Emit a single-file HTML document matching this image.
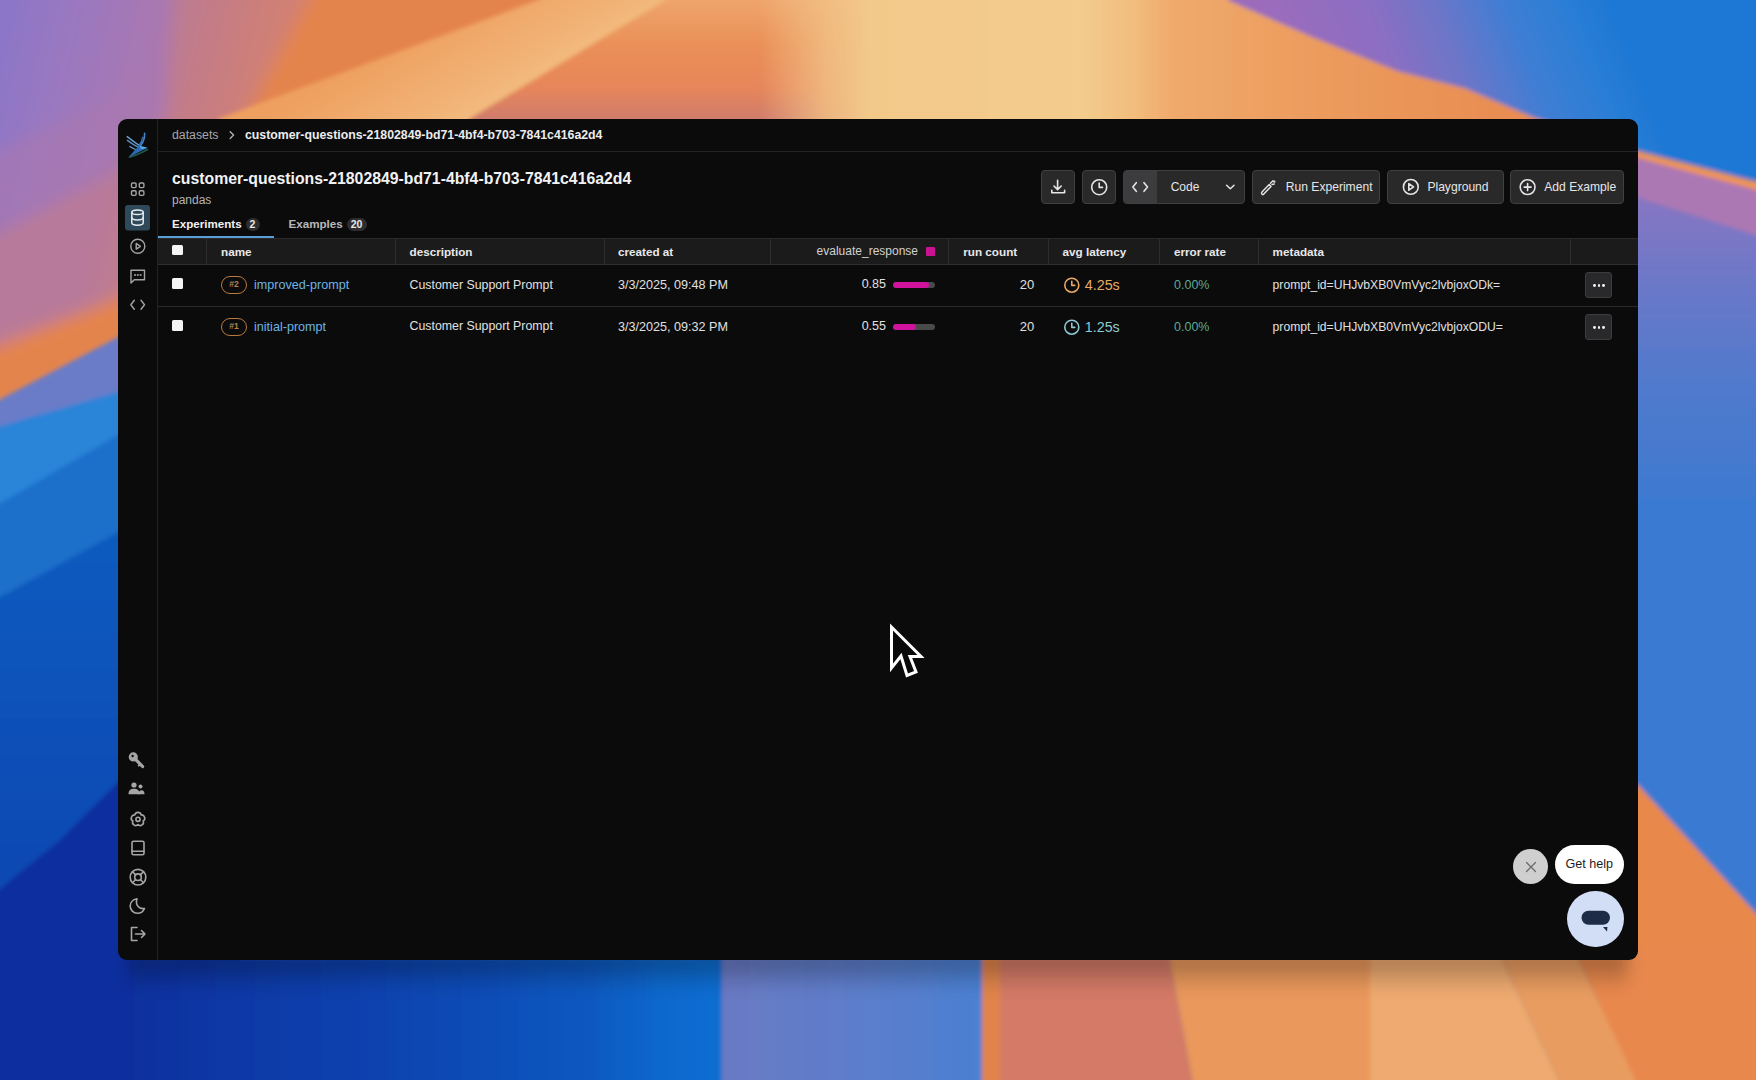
<!DOCTYPE html>
<html><head><meta charset="utf-8">
<style>
*{box-sizing:border-box;margin:0;padding:0}
html,body{width:1756px;height:1080px;overflow:hidden;background:#3a6fc8;font-family:"Liberation Sans",sans-serif}
#bg{position:absolute;left:0;top:0;width:1756px;height:1080px}
#win{position:absolute;left:118px;top:119px;width:1520px;height:841px;background:#0b0b0b;border-radius:9px;overflow:hidden}
.abs{position:absolute;white-space:nowrap}
#side{position:absolute;left:0;top:0;width:39px;height:842px;border-right:1px solid #1e1e20;background:#0e0e0f}
#crumb{position:absolute;left:40px;top:0;right:0;height:33px;border-bottom:1px solid #222224}
.t12{font-size:12px}
.btn{position:absolute;top:51px;height:34px;background:#29292a;border:1px solid #404042;border-radius:4px;color:#e6e6e6;font-size:12px}
.ico{position:absolute}
.th{position:absolute;top:119px;height:27px;background:#1a1a1b;border-bottom:1px solid #2c2c2e;left:40px;right:0}
.sep{position:absolute;top:0;width:1px;height:26px;background:#2e2e30}
.hd{position:absolute;font-size:11.7px;line-height:1;font-weight:700;color:#e8e8ea}
.row{position:absolute;left:40px;right:0;height:42px;border-bottom:1px solid #2a2a2c}
.cell{position:absolute;font-size:12px;color:#e0e0e0;white-space:nowrap}
</style></head><body>
<svg id="bg" width="1756" height="1080" viewBox="0 0 1756 1080">
<defs>
<filter id="b3" x="-10%" y="-10%" width="120%" height="120%"><feGaussianBlur stdDeviation="2"/></filter>
<filter id="b8" x="-20%" y="-20%" width="140%" height="140%"><feGaussianBlur stdDeviation="8"/></filter>
<linearGradient id="gLeft" gradientUnits="userSpaceOnUse" x1="0" y1="560" x2="0" y2="900">
<stop offset="0" stop-color="#0e5abe"/><stop offset="0.5" stop-color="#0a50b8"/><stop offset="1" stop-color="#0a48b2"/></linearGradient>
<linearGradient id="gPurp" gradientUnits="userSpaceOnUse" x1="0" y1="0" x2="180" y2="40">
<stop offset="0" stop-color="#8a76c8"/><stop offset="0.4" stop-color="#9a78c0"/><stop offset="1" stop-color="#ae78ac"/></linearGradient>
<linearGradient id="gSalm" gradientUnits="userSpaceOnUse" x1="150" y1="20" x2="270" y2="50">
<stop offset="0" stop-color="#b87a9a"/><stop offset="0.5" stop-color="#c47c86"/><stop offset="1" stop-color="#d08074"/></linearGradient>
<linearGradient id="gBand" gradientUnits="userSpaceOnUse" x1="400" y1="40" x2="470" y2="160">
<stop offset="0" stop-color="#eea060"/><stop offset="0.6" stop-color="#f2b478"/><stop offset="1" stop-color="#f5c888"/></linearGradient>
<linearGradient id="gOrR" gradientUnits="userSpaceOnUse" x1="0" y1="0" x2="0" y2="125">
<stop offset="0" stop-color="#eea56c"/><stop offset="0.35" stop-color="#ea9058"/><stop offset="0.7" stop-color="#e6865a"/><stop offset="1" stop-color="#cc7a70"/></linearGradient>
<linearGradient id="gFade" gradientUnits="userSpaceOnUse" x1="760" y1="0" x2="870" y2="0">
<stop offset="0" stop-color="#f3c68a" stop-opacity="0"/><stop offset="0.6" stop-color="#f2c286" stop-opacity="0.8"/><stop offset="1" stop-color="#f3c98a" stop-opacity="1"/></linearGradient>
<linearGradient id="gCream" gradientUnits="userSpaceOnUse" x1="860" y1="0" x2="1550" y2="0">
<stop offset="0" stop-color="#f3c98a"/><stop offset="0.32" stop-color="#f3cc8e"/><stop offset="0.4" stop-color="#f2bc7c"/><stop offset="0.45" stop-color="#f0aa6c"/><stop offset="0.65" stop-color="#ec9c5e"/><stop offset="1" stop-color="#e88a50"/></linearGradient>
<linearGradient id="gSky" gradientUnits="userSpaceOnUse" x1="1260" y1="0" x2="1560" y2="-120">
<stop offset="0" stop-color="#9c6cbc"/><stop offset="0.3" stop-color="#8c6ec2"/><stop offset="0.5" stop-color="#6c76c8"/><stop offset="0.7" stop-color="#3e7ed4"/><stop offset="0.88" stop-color="#2a7ed6"/><stop offset="1" stop-color="#1e78d4"/></linearGradient>
<linearGradient id="gRmid" gradientUnits="userSpaceOnUse" x1="0" y1="190" x2="0" y2="500">
<stop offset="0" stop-color="#8a76c2"/><stop offset="0.3" stop-color="#6c78c8"/><stop offset="0.6" stop-color="#527acc"/><stop offset="1" stop-color="#3e7ad0"/></linearGradient>
<linearGradient id="gBL" gradientUnits="userSpaceOnUse" x1="118" y1="0" x2="722" y2="0">
<stop offset="0" stop-color="#0a2e9e"/><stop offset="0.15" stop-color="#0a36a4"/><stop offset="0.5" stop-color="#0a46b2"/><stop offset="0.78" stop-color="#0a58c0"/><stop offset="0.9" stop-color="#0a68cc"/><stop offset="1" stop-color="#0c6ed2"/></linearGradient>
<linearGradient id="gLav" gradientUnits="userSpaceOnUse" x1="722" y1="0" x2="982" y2="0">
<stop offset="0" stop-color="#6a7ac4"/><stop offset="0.6" stop-color="#5a7ecc"/><stop offset="1" stop-color="#4a80d2"/></linearGradient>
<linearGradient id="gShadow" x1="0" y1="0" x2="0" y2="1">
<stop offset="0" stop-color="#000" stop-opacity="0.35"/><stop offset="1" stop-color="#000" stop-opacity="0"/></linearGradient>
</defs>
<rect x="0" y="0" width="1756" height="1080" fill="#1a6ac8"/>
<g filter="url(#b8)">
<rect x="-20" y="-20" width="420" height="720" fill="url(#gPurp)"/>
<polygon points="-20,160 118,95 165,60 175,-20 260,-20 260,300 -20,300" fill="#a878b0" opacity="0.7"/>
<polygon points="-20,244 118,170 165,119 175,-20 900,-20 900,700 -20,700" fill="url(#gSalm)"/>
<polygon points="-20,352 118,298 245,119 318,-20 900,-20 900,700 -20,700" fill="#e4844e"/>
</g>
<g filter="url(#b3)">
<!-- LEFT STRIP -->
<polygon points="-20,410 118,337 240,280 240,700 -20,700" fill="#6a7cc8"/>
<polygon points="-20,432 118,392 240,340 240,1100 -20,1100" fill="#2a84d8"/>
<polygon points="-20,515 118,435 240,400 240,1100 -20,1100" fill="#1a70ca"/>
<polygon points="-20,608 118,532 240,480 240,1100 -20,1100" fill="url(#gLeft)"/>
<polygon points="-20,905 60,840 118,782 240,700 240,1100 -20,1100" fill="#0a2e9e"/>
<!-- TOP STRIP -->
<polygon points="560,-20 694,-20 666,0 471,118 450,140 200,140 220,118 538,0" fill="url(#gBand)"/>
<polygon points="694,-20 1000,-20 1000,140 450,140 471,118 666,0" fill="url(#gOrR)"/>
<rect x="760" y="-20" width="240" height="160" fill="url(#gFade)"/>
<polygon points="870,-20 1228,-20 1228,0 1313,37 1398,71 1465,88 1533,117 1600,140 870,140" fill="url(#gCream)"/>
<polygon points="1228,-20 1776,-20 1776,186 1638,150 1533,117 1465,88 1398,71 1313,37 1228,0" fill="url(#gSky)"/>
<!-- RIGHT STRIP -->
<polygon points="1600,152 1638,158 1776,194 1776,242 1638,198 1600,190" fill="#ac78b4"/>
<polygon points="1600,140 1638,151 1776,187 1776,195 1638,158 1600,148" fill="#f29452"/>
<polygon points="1600,190 1638,198 1776,242 1776,500 1600,500" fill="url(#gRmid)"/>
<polygon points="1600,500 1776,500 1776,935 1638,785 1600,770" fill="#3a7ad2"/>
<polygon points="1600,770 1638,785 1776,935 1776,1100 1600,1100" fill="#e8884c"/>
<!-- BOTTOM STRIP -->
<rect x="118" y="958" width="604" height="150" fill="url(#gBL)"/>
<rect x="722" y="950" width="260" height="150" fill="url(#gLav)"/>
<polygon points="982,950 1168,950 1196,1100 982,1100" fill="#d47a66"/>
<polygon points="982,950 1000,950 1000,1100 982,1100" fill="#e0844c"/>
<polygon points="1168,950 1370,950 1370,1100 1196,1100" fill="#ea985c"/>
<polygon points="1370,950 1497,950 1568,1100 1370,1100" fill="#eeaa70"/>
<polygon points="1497,950 1574,950 1645,1100 1568,1100" fill="#e99c60"/>
<polygon points="1574,950 1776,950 1776,1100 1645,1100" fill="#e8884e"/>
</g>
<rect x="128" y="952" width="1500" height="40" fill="url(#gShadow)" filter="url(#b8)"/>
</svg>


<div id="win"></div>
<div class="abs" style="left:157px;top:119px;width:1px;height:841px;background:#222224"></div>
<div class="abs" style="left:158px;top:151px;width:1480px;height:1px;background:#242426"></div>
<!-- logo -->
<svg class="abs" style="left:120px;top:127px" width="36" height="36" viewBox="120 127 36 36">
<g fill="none" stroke-linecap="round">
<path d="M127.2 136.6 C131 139.5 135 142.5 139 145.2" stroke="#6a9cc8" stroke-width="1.5"/>
<path d="M127.4 140.4 C131 143 134.5 145.5 138.5 147.2" stroke="#5a90c4" stroke-width="1.4"/>
<path d="M129.8 146.5 C132 147.8 134 149 136.5 150" stroke="#5a8cc0" stroke-width="1.3"/>
<path d="M144.6 133.3 C144.8 137.5 143.5 142 140.5 145.8" stroke="#3f86cc" stroke-width="1.6"/>
<path d="M142.5 137.5 C142 140.5 141 143 139.5 145" stroke="#3576bc" stroke-width="1.3"/>
<path d="M147.5 149.5 C143 152 136 155 129.5 157.3" stroke="#1f5a48" stroke-width="1.6"/>
</g>
<path d="M138.5 145.5 C141.5 146.3 144.5 147 147.6 147.8 C145 149.5 141 151 136 153.5 C133.5 154.8 131 156 128.6 157.2 C131 154.5 134 151 137 148 Z" fill="#2a6cb4"/>
<path d="M140 146 C142.5 146.4 145 147 147.4 147.8 C145 148.8 142.5 149.2 140.5 148.8 Z" fill="#5aa8e6"/>
</svg>
<!-- sidebar icons -->
<svg class="abs" style="left:118px;top:170px" width="40" height="800" viewBox="0 0 40 800" fill="none" stroke="#a4a4a6" stroke-width="1.4" stroke-linecap="round" stroke-linejoin="round">
 <rect x="13.5" y="13" width="4.6" height="4.6" rx="1.1"/><rect x="21.3" y="13" width="4.6" height="4.6" rx="1.1"/>
 <rect x="13.5" y="20.8" width="4.6" height="4.6" rx="1.1"/><rect x="21.3" y="20.8" width="4.6" height="4.6" rx="1.1"/>
 <rect x="7" y="35" width="25" height="25.5" rx="3" fill="#2e4a5a" stroke="none"/>
 <g stroke="#e4eaee" stroke-width="1.5">
 <ellipse cx="19.5" cy="42.3" rx="5.7" ry="2.3"/>
 <path d="M13.8 42.3 V52.8 C13.8 54.2 16.3 55.2 19.5 55.2 C22.7 55.2 25.2 54.2 25.2 52.8 V42.3"/>
 <path d="M13.8 47.6 C13.8 49 16.3 50 19.5 50 C22.7 50 25.2 49 25.2 47.6"/>
 </g>
 <circle cx="19.8" cy="76.3" r="7"/><path d="M18.2 73.4 L22.4 76.3 L18.2 79.2 Z"/>
 <path d="M13 100.3 H26.5 V109.8 H16.3 L13 113 Z"/>
 <circle cx="17" cy="105" r="0.35" fill="#a4a4a6"/><circle cx="19.8" cy="105" r="0.35" fill="#a4a4a6"/><circle cx="22.6" cy="105" r="0.35" fill="#a4a4a6"/>
 <path d="M16.3 130.3 L12.8 134.8 L16.3 139.3"/><path d="M23 130.3 L26.5 134.8 L23 139.3"/>
</svg>
<svg class="abs" style="left:118px;top:740px" width="40" height="220" viewBox="0 0 40 220" fill="none" stroke="#a6a6a8" stroke-width="1.6" stroke-linecap="round" stroke-linejoin="round">
 <!-- key 752-768 => 12-28 -->
 <path fill="#a4a4a6" stroke="none" fill-rule="evenodd" d="M15.3 12.3 A4.6 4.6 0 1 1 15.3 21.5 A4.6 4.6 0 1 1 15.3 12.3 Z M14.6 14.8 A1.2 1.2 0 1 0 14.6 17.2 A1.2 1.2 0 1 0 14.6 14.8 Z"/>
 <path d="M17.8 19.6 L24.6 26.5" stroke-width="3.2"/><path d="M22 24.5 L20.8 25.6" stroke-width="2"/>
 <!-- people 782-794 => 42-54 -->
 <circle cx="16" cy="45" r="2.6" fill="#a6a6a8" stroke="none"/><circle cx="22.5" cy="46.5" r="2" fill="#a6a6a8" stroke="none"/>
 <path d="M10.5 54.3 C10.5 50 13 48.8 16 48.8 C19 48.8 21.5 50 21.5 54.3Z" fill="#a6a6a8" stroke="none"/>
 <path d="M20 54.3 C20.5 51.5 22 50.3 23.5 50.3 C25.5 50.3 26.5 51.5 26.5 54.3Z" fill="#a6a6a8" stroke="none"/>
 <!-- gear flower 811-827 => 71-87 -->
 <path d="M16.83 74.93 A3.25 3.25 0 0 1 23.17 74.93 A3.25 3.25 0 0 1 25.14 80.97 A3.25 3.25 0 0 1 20.00 84.70 A3.25 3.25 0 0 1 14.86 80.97 A3.25 3.25 0 0 1 16.83 74.93 Z"/>
 <circle cx="20" cy="79.3" r="2.1"/>
 <!-- book 841-855 => 101-115 -->
 <rect x="14" y="101.2" width="12" height="13.6" rx="1.5"/><path d="M14 111.2 H26"/>
 <!-- lifebuoy 868.7-885.7 => 128.7-145.7 -->
 <circle cx="20" cy="137.2" r="7.8"/><circle cx="20" cy="137.2" r="3.3"/>
 <path d="M14.5 131.7 L17.7 134.9 M25.5 131.7 L22.3 134.9 M14.5 142.7 L17.7 139.5 M25.5 142.7 L22.3 139.5"/>
 <!-- moon 898-913 => 158-173 -->
 <path d="M19 158.8 C14.5 159.6 12.2 163 12.2 166 C12.2 170 15.3 173.2 19.5 173.2 C23 173.2 25.5 171 26.5 168.5 C21 169.5 17 165 19 158.8 Z"/>
 <!-- logout 927-941 => 187-201 -->
 <path d="M19 187.5 H13.5 V200.5 H19"/><path d="M17.5 194 H27 M23.5 190.5 L27 194 L23.5 197.5"/>
</svg>

<!-- breadcrumb -->
<div class="abs" style="left:172px;top:128.7px;font-size:12.3px;line-height:1;color:#a6a6a8">datasets</div>
<svg class="abs" style="left:226px;top:129px" width="12" height="12" viewBox="0 0 12 12"><path d="M4.2 2.8 L7.6 6.1 L4.2 9.4" fill="none" stroke="#b0b0b2" stroke-width="1.4" stroke-linecap="round" stroke-linejoin="round"/></svg>
<div class="abs" style="left:245px;top:128.9px;font-size:12.3px;line-height:1;font-weight:700;color:#ececee">customer-questions-21802849-bd71-4bf4-b703-7841c416a2d4</div>
<!-- title -->
<div class="abs" style="left:172px;top:171.2px;font-size:15.8px;line-height:1;font-weight:700;color:#f2f2f4">customer-questions-21802849-bd71-4bf4-b703-7841c416a2d4</div>
<div class="abs" style="left:172px;top:193.8px;font-size:12px;line-height:1;color:#b4b4b6">pandas</div>
<!-- tabs -->
<div class="abs" style="left:172px;top:218.3px;font-size:11.6px;line-height:1;font-weight:700;color:#f2f2f4">Experiments</div>
<div class="abs badge" style="left:245.5px;top:217.7px;width:14px;height:13px;border-radius:7px;background:#2e2e30;color:#e8e8e8;font-size:10.5px;font-weight:700;line-height:13px;text-align:center">2</div>
<div class="abs" style="left:288.5px;top:218.3px;font-size:11.6px;line-height:1;font-weight:700;color:#b8b8ba">Examples</div>
<div class="abs badge" style="left:346.5px;top:217.7px;width:20px;height:13px;border-radius:7px;background:#2e2e30;color:#e8e8e8;font-size:10.5px;font-weight:700;line-height:13px;text-align:center">20</div>
<div class="abs" style="left:158px;top:238px;width:1480px;height:1px;background:#2a2a2c"></div>
<div class="abs" style="left:158px;top:236.3px;width:116px;height:2px;background:#5a9ed8"></div>
<!-- table header -->
<div class="abs" style="left:158px;top:238.5px;width:1480px;height:25.5px;background:#1b1b1b"></div>
<div class="abs" style="left:158px;top:264px;width:1480px;height:1px;background:#2e2e30"></div>
<div class="abs" style="left:206px;top:239px;width:1px;height:25px;background:#2e2e30"></div>
<div class="abs" style="left:394.5px;top:239px;width:1px;height:25px;background:#2e2e30"></div>
<div class="abs" style="left:604px;top:239px;width:1px;height:25px;background:#2e2e30"></div>
<div class="abs" style="left:770px;top:239px;width:1px;height:25px;background:#2e2e30"></div>
<div class="abs" style="left:948px;top:239px;width:1px;height:25px;background:#2e2e30"></div>
<div class="abs" style="left:1048px;top:239px;width:1px;height:25px;background:#2e2e30"></div>
<div class="abs" style="left:1159px;top:239px;width:1px;height:25px;background:#2e2e30"></div>
<div class="abs" style="left:1257.5px;top:239px;width:1px;height:25px;background:#2e2e30"></div>
<div class="abs" style="left:1569.5px;top:239px;width:1px;height:25px;background:#2e2e30"></div>
<div class="abs" style="left:172px;top:244.5px;width:11px;height:10.5px;background:#f4f4f4;border-radius:1.5px"></div>
<div class="abs hd" style="left:221px;top:245.6px">name</div>
<div class="abs hd" style="left:409.5px;top:245.6px">description</div>
<div class="abs hd" style="left:618px;top:245.6px">created at</div>
<div class="abs hd" style="left:816.6px;top:245.4px;font-size:12px;font-weight:400;color:#d2d2d4">evaluate_response</div>
<div class="abs" style="left:926px;top:246.5px;width:9px;height:9.5px;background:#cc1294;border-radius:1px"></div>
<div class="abs hd" style="left:963.3px;top:245.6px">run count</div>
<div class="abs hd" style="left:1062.5px;top:245.6px">avg latency</div>
<div class="abs hd" style="left:1174px;top:245.6px">error rate</div>
<div class="abs hd" style="left:1272.6px;top:245.6px">metadata</div>
<!-- rows -->
<div class="abs" style="left:158px;top:305.5px;width:1480px;height:1px;background:#2a2a2c"></div>
<div class="abs" style="left:172px;top:278.2px;width:11px;height:10.8px;background:#f4f4f4;border-radius:1.5px"></div>
<div class="abs" style="left:221px;top:276.0px;width:26px;height:18px;border:1.3px solid #b87a3e;border-radius:9px;color:#b08456;font-size:8.6px;font-weight:700;line-height:15.4px;text-align:center">#2</div>
<div class="abs cell" style="left:254px;top:279.1px;font-size:12.6px;line-height:1;color:#6cb4e4">improved-prompt</div>
<div class="abs cell" style="left:409.5px;top:278.5px;font-size:12.35px;line-height:1">Customer Support Prompt</div>
<div class="abs cell" style="left:618px;top:279.1px;font-size:12.6px;line-height:1">3/3/2025, 09:48 PM</div>
<div class="abs cell" style="right:870px;top:278.4px;font-size:12.5px;line-height:1">0.85</div>
<div class="abs" style="left:892.5px;top:282.0px;width:42.5px;height:6px;border-radius:3px;background:#4a4a4c;overflow:hidden"><div style="width:85%;height:6px;background:#d0129c;border-radius:3px"></div></div>
<div class="abs cell" style="right:721.7px;top:278.0px;font-size:13px;line-height:1">20</div>
<svg class="abs" style="left:1063px;top:277.0px" width="18" height="17" viewBox="0 0 18 17"><circle cx="8.8" cy="8.2" r="7" fill="none" stroke="#e8a866" stroke-width="1.6"/><path d="M8.8 4.3 V8.4 H11.8" fill="none" stroke="#e8a866" stroke-width="1.6" stroke-linecap="round" stroke-linejoin="round"/></svg>
<div class="abs cell" style="left:1084.8px;top:277.7px;line-height:1;font-size:14.3px;color:#e8a866">4.25s</div>
<div class="abs cell" style="left:1174px;top:279.4px;font-size:12.5px;line-height:1;color:#5caa94">0.00%</div>
<div class="abs cell" style="left:1272.6px;top:278.7px;font-size:12.15px;line-height:1">prompt_id=UHJvbXB0VmVyc2lvbjoxODk=</div>
<div class="abs" style="left:1584.5px;top:272.4px;width:27px;height:26px;background:#29292b;border:1px solid #3c3c3e;border-radius:3px"></div>
<div class="abs" style="left:1593.2px;top:284.0px;width:2.8px;height:2.8px;border-radius:50%;background:#f0f0f0"></div>
<div class="abs" style="left:1597.6px;top:284.0px;width:2.8px;height:2.8px;border-radius:50%;background:#f0f0f0"></div>
<div class="abs" style="left:1602.0px;top:284.0px;width:2.8px;height:2.8px;border-radius:50%;background:#f0f0f0"></div>
<div class="abs" style="left:172px;top:320.0px;width:11px;height:10.8px;background:#f4f4f4;border-radius:1.5px"></div>
<div class="abs" style="left:221px;top:317.8px;width:26px;height:18px;border:1.3px solid #b87a3e;border-radius:9px;color:#b08456;font-size:8.6px;font-weight:700;line-height:15.4px;text-align:center">#1</div>
<div class="abs cell" style="left:254px;top:320.9px;font-size:12.6px;line-height:1;color:#6cb4e4">initial-prompt</div>
<div class="abs cell" style="left:409.5px;top:320.3px;font-size:12.35px;line-height:1">Customer Support Prompt</div>
<div class="abs cell" style="left:618px;top:320.9px;font-size:12.6px;line-height:1">3/3/2025, 09:32 PM</div>
<div class="abs cell" style="right:870px;top:320.2px;font-size:12.5px;line-height:1">0.55</div>
<div class="abs" style="left:892.5px;top:323.8px;width:42.5px;height:6px;border-radius:3px;background:#4a4a4c;overflow:hidden"><div style="width:55%;height:6px;background:#d0129c;border-radius:3px"></div></div>
<div class="abs cell" style="right:721.7px;top:319.8px;font-size:13px;line-height:1">20</div>
<svg class="abs" style="left:1063px;top:318.8px" width="18" height="17" viewBox="0 0 18 17"><circle cx="8.8" cy="8.2" r="7" fill="none" stroke="#8ccad4" stroke-width="1.6"/><path d="M8.8 4.3 V8.4 H11.8" fill="none" stroke="#8ccad4" stroke-width="1.6" stroke-linecap="round" stroke-linejoin="round"/></svg>
<div class="abs cell" style="left:1084.8px;top:319.5px;line-height:1;font-size:14.3px;color:#8ccad4">1.25s</div>
<div class="abs cell" style="left:1174px;top:321.2px;font-size:12.5px;line-height:1;color:#5caa94">0.00%</div>
<div class="abs cell" style="left:1272.6px;top:320.5px;font-size:12.15px;line-height:1">prompt_id=UHJvbXB0VmVyc2lvbjoxODU=</div>
<div class="abs" style="left:1584.5px;top:314.2px;width:27px;height:26px;background:#29292b;border:1px solid #3c3c3e;border-radius:3px"></div>
<div class="abs" style="left:1593.2px;top:325.8px;width:2.8px;height:2.8px;border-radius:50%;background:#f0f0f0"></div>
<div class="abs" style="left:1597.6px;top:325.8px;width:2.8px;height:2.8px;border-radius:50%;background:#f0f0f0"></div>
<div class="abs" style="left:1602.0px;top:325.8px;width:2.8px;height:2.8px;border-radius:50%;background:#f0f0f0"></div>
<!-- header buttons -->
<div class="btn" style="left:1041px;top:170px;width:33.5px;height:34px"></div>
<svg class="abs" style="left:1041px;top:170px" width="34" height="34" viewBox="0 0 34 34" fill="none" stroke="#e6e6e8" stroke-width="1.6" stroke-linecap="round" stroke-linejoin="round"><path d="M16.6 10.3 V19.5 M13 16 L16.6 19.6 L20.2 16"/><path d="M10.8 20.3 V22.8 H23.6 V20.3"/></svg>
<div class="btn" style="left:1081.5px;top:170px;width:34.5px;height:34px"></div>
<svg class="abs" style="left:1081.5px;top:170px" width="34" height="34" viewBox="0 0 34 34" fill="none" stroke="#e6e6e8" stroke-width="1.6" stroke-linecap="round" stroke-linejoin="round"><circle cx="17.2" cy="17.2" r="7.5"/><path d="M17.2 13 V17.4 H20.5"/></svg>
<div class="btn" style="left:1123px;top:170px;width:122px;height:34px;overflow:hidden"><div style="position:absolute;left:0;top:0;width:33px;height:34px;background:#3c3c3e"></div></div>
<svg class="abs" style="left:1123px;top:170px" width="40" height="34" viewBox="0 0 40 34" fill="none" stroke="#e6e6e8" stroke-width="1.6" stroke-linecap="round" stroke-linejoin="round"><path d="M13.3 12.7 L9.8 17 L13.3 21.3 M21 12.7 L24.5 17 L21 21.3"/></svg>
<div class="abs" style="left:1170.7px;top:181.2px;font-size:12px;line-height:1;color:#e6e6e8">Code</div>
<svg class="abs" style="left:1223px;top:180px" width="14" height="14" viewBox="0 0 14 14" fill="none" stroke="#e6e6e8" stroke-width="1.5" stroke-linecap="round" stroke-linejoin="round"><path d="M3.6 5.2 L7.3 8.8 L11 5.2"/></svg>
<div class="btn" style="left:1252px;top:170px;width:128px;height:34px"></div>
<svg class="abs" style="left:1252px;top:170px" width="30" height="34" viewBox="0 0 30 34" fill="none" stroke="#e6e6e8" stroke-width="1.4" stroke-linecap="round" stroke-linejoin="round"><path d="M10.3 24.5 C9.3 23.8 9.3 22.8 10 22 L17.2 14.6 L19 16.4 L11.8 24 C11.2 24.7 10.9 24.8 10.3 24.5 Z"/><path d="M18.5 13.3 L21 10.8 M20 14.5 L22.2 14"/><circle cx="22.3" cy="11.6" r="0.5" fill="#e6e6e8"/></svg>
<div class="abs" style="left:1285.8px;top:181.1px;font-size:12.1px;line-height:1;color:#e6e6e8">Run Experiment</div>
<div class="btn" style="left:1387px;top:170px;width:116.5px;height:34px"></div>
<svg class="abs" style="left:1387px;top:170px" width="34" height="34" viewBox="0 0 34 34" fill="none" stroke="#e6e6e8" stroke-width="1.6" stroke-linecap="round" stroke-linejoin="round"><circle cx="23.8" cy="16.9" r="7.4"/><path d="M21.8 13.6 L26.6 16.9 L21.8 20.2 Z"/></svg>
<div class="abs" style="left:1427.4px;top:181px;font-size:12.1px;line-height:1;color:#e6e6e8">Playground</div>
<div class="btn" style="left:1510px;top:170px;width:114px;height:34px"></div>
<svg class="abs" style="left:1510px;top:170px" width="34" height="34" viewBox="0 0 34 34" fill="none" stroke="#e6e6e8" stroke-width="1.6" stroke-linecap="round" stroke-linejoin="round"><circle cx="17.6" cy="17.1" r="7.4"/><path d="M17.6 13.6 V20.6 M14.1 17.1 H21.1"/></svg>
<div class="abs" style="left:1544.3px;top:181px;font-size:12.1px;line-height:1;color:#e6e6e8">Add Example</div>
<!-- help widget -->
<div class="abs" style="left:1512.5px;top:848.5px;width:35.5px;height:35.5px;border-radius:50%;background:#cfcfd0"></div>
<svg class="abs" style="left:1512.5px;top:848.5px" width="36" height="36" viewBox="0 0 36 36" fill="none" stroke="#6a6a6c" stroke-width="1.3" stroke-linecap="round"><path d="M13.5 13.5 L22.5 22.5 M22.5 13.5 L13.5 22.5"/></svg>
<div class="abs" style="left:1554.5px;top:844.5px;width:69.5px;height:39.5px;border-radius:20px;background:#ffffff;color:#1e1e1e;font-size:12.6px;line-height:39.5px;text-align:center">Get help</div>
<div class="abs" style="left:1567.3px;top:890.7px;width:56.5px;height:56.5px;border-radius:50%;background:#d2ddf6"></div>
<svg class="abs" style="left:1567.3px;top:890.7px" width="57" height="57" viewBox="0 0 57 57"><rect x="14.5" y="19.8" width="28.5" height="14" rx="7" fill="#1f2c48"/><path d="M36 36 L40.5 36 L40 40.5 Z" fill="#1f2c48"/></svg>
<!-- cursor -->
<svg class="abs" style="left:880px;top:615px" width="60" height="70" viewBox="880 615 60 70"><path d="M891.5 627 L891.5 668 L901 656 L907 675.5 L916 672 L910 656.5 L921 656.5 Z" fill="#0a0a0a" stroke="#ffffff" stroke-width="3" stroke-linejoin="miter"/></svg>
</body></html>
